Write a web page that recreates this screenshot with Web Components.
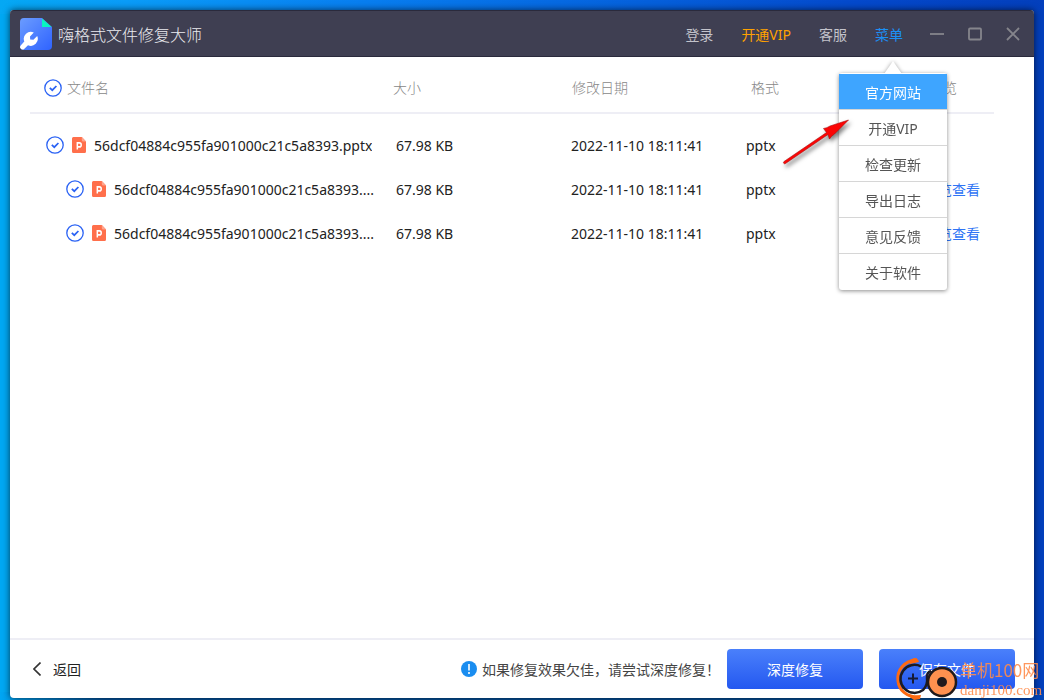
<!DOCTYPE html>
<html lang="zh-CN">
<head>
<meta charset="utf-8">
<meta name="viewport" content="width=device-width, initial-scale=1">
<title>嗨格式文件修复大师</title>
<style>
  * { box-sizing: border-box; }
  html { height: 100%; }
  body {
    margin: 0;
    min-height: 100%;
    display: flex;
    padding: 10px 10px 2px;
    font: 14px/20px "Noto Sans", "Noto Sans CJK SC", sans-serif;
    color: #222;
    background:
      linear-gradient(90deg, #05a8f4 0%, #0a9cf8 12%, #087ef0 35%, #0560dc 62%, #0449cc 82%, #033fbc 100%) top / 100% 14px no-repeat,
      linear-gradient(90deg, #00a6f4 0%, #03519b 10%, #034b92 90%, #0345b8 97%) bottom / 100% 8px no-repeat,
      linear-gradient(90deg, #00a8f3 0%, #00a8f3 50%, #033fbb 50%, #033fbb 100%);
  }
</style>
</head>
<body>

<app-window>
  <title-bar slot="bar" heading="嗨格式文件修复大师"></title-bar>
  <file-list></file-list>
  <action-bar slot="foot">
    <hint-text slot="hint">如果修复效果欠佳，请尝试深度修复！</hint-text>
    <push-button slot="actions">深度修复</push-button>
    <push-button slot="actions">保存文件</push-button>
  </action-bar>
</app-window>
<pointer-arrow></pointer-arrow>
<site-mark></site-mark>

<script>
  const define = (name, html, setup) => {
    const tpl = document.createElement('template');
    tpl.innerHTML = '<style>*{box-sizing:border-box}button{font:inherit;color:inherit;background:none;border:0;padding:0;cursor:pointer}</style>' + html;
    customElements.define(name, class extends HTMLElement {
      connectedCallback() {
        if (this.shadowRoot) return;
        this.attachShadow({ mode: 'open' }).append(tpl.content.cloneNode(true));
        if (setup) setup(this, this.shadowRoot);
      }
    });
  };

  define('app-window', `
    <style>
      :host { flex: 1; min-width: 0; display: flex; flex-direction: column; background: #fff;
        border-radius: 4px; box-shadow: 0 0 7px rgba(0,0,0,.65); }
      main { flex: 1; }
    </style>
    <slot name="bar"></slot>
    <main><slot></slot></main>
    <slot name="foot"></slot>`);

  define('app-logo', `
    <style>:host { display: block; width: 32px; height: 32px; } svg { display: block; }</style>
    <svg width="32" height="32" viewBox="0 0 32 32" aria-hidden="true">
      <defs><linearGradient id="g" x1="0" y1="0" x2="1" y2="1">
        <stop offset="0" stop-color="#6b9cff"/><stop offset="1" stop-color="#2f63ff"/>
      </linearGradient></defs>
      <path d="M4 0H22L32 9V28a4 4 0 0 1-4 4H4a4 4 0 0 1-4-4V4a4 4 0 0 1 4-4Z" fill="url(#g)"/>
      <path d="M22 .5L31.500 9H22Z" fill="#08f7c0"/>
      <path d="M13.800 14.500A7 7 0 0 0 4.300 23.400L.9 27.200a2.400 2.400 0 0 0 3.500 3.500L8 27.200A7 7 0 0 0 17.200 18L13.400 21.800L10.200 21.600L10 18.400Z" fill="#fff"/>
    </svg>`);

  define('title-bar', `
    <style>
      :host { display: flex; align-items: center; height: 47px; padding: 1px 14px 0 10px;
        background: #3f3f52; border: 1px solid #2a2a3c;
        border-left: 0; border-right: 0; border-radius: 4px 4px 0 0; color: #c3c3cb; }
      h1 { flex: 1; margin: 0 0 0 6px; padding-top: 2px; font-size: 16px; line-height: 24px; font-weight: 300; color: #ececf0; white-space: nowrap; }
      nav { display: flex; align-items: center; gap: 28px; padding-top: 2px; white-space: nowrap; font-weight: 400; }
      a { color: inherit; text-decoration: none; }
      .vip { color: #ffa200; }
      .open { color: #1c90f5; }
      .menu { position: relative; }
      drop-menu { position: absolute; top: 48px; left: -36px; z-index: 2; }
      .win { display: flex; gap: 24px; margin-left: 27px; }
      .win button { width: 14px; height: 14px; display: block; }
      svg { display: block; }
    </style>
    <app-logo></app-logo>
    <h1></h1>
    <nav>
      <a href="#login">登录</a>
      <a class="vip" href="#vip">开通VIP</a>
      <a href="#service">客服</a>
      <div class="menu"><button class="open" aria-haspopup="true" aria-expanded="true">菜单</button><drop-menu></drop-menu></div>
    </nav>
    <div class="win">
      <button aria-label="最小化"><svg width="14" height="14" fill="none" stroke="#85858c" stroke-width="1.800"><path d="M0 7H14"/></svg></button>
      <button aria-label="最大化"><svg width="14" height="14" fill="none" stroke="#85858c" stroke-width="1.800"><rect x="1" y="1.500" width="12" height="11" rx="1"/></svg></button>
      <button aria-label="关闭"><svg width="14" height="14" fill="none" stroke="#85858c" stroke-width="1.800"><path d="M1 1L13 13M13 1L1 13"/></svg></button>
    </div>`, (host, root) => { root.querySelector('h1').textContent = host.getAttribute('heading'); });

  define('drop-menu', `
    <style>
      :host { display: block; width: 108px; background: #fff; color: #555; border-radius: 3px;
        filter: drop-shadow(0 1px 2px rgba(0,0,0,.45)); font-weight: 400; padding-top: 1px; }
      .tip { position: absolute; top: -12px; left: 45px; display: block; }
      button { display: block; width: 100%; height: 36px; text-align: center; border-bottom: 1px solid #d6d6d6; padding-top: 2px; }
      button:first-of-type { background: #3ea5ff; color: #fff; }
      button:last-of-type { border-bottom: 0; }
    </style>
    <svg class="tip" width="18" height="13" aria-hidden="true"><path d="M9 0L18 13H0Z" fill="#fff"/></svg>
    <button>官方网站</button><button>开通VIP</button><button>检查更新</button>
    <button>导出日志</button><button>意见反馈</button><button>关于软件</button>`);

  define('round-check', `
    <style>
      :host { display: inline-grid; width: 18px; height: 18px; flex: none; }
      input { appearance: none; grid-area: 1/1; width: 18px; height: 18px; margin: 0; border: 0; }
      svg { grid-area: 1/1; pointer-events: none; fill: none; stroke: #2a62f4; }
    </style>
    <input type="checkbox" checked>
    <svg width="18" height="18" aria-hidden="true">
      <circle cx="9" cy="9" r="8.200" stroke-width="1.300"/>
      <path d="M5.800 8.800L8.300 11.200L12.400 7" stroke-width="1.700"/>
    </svg>`, (host, root) => {
      root.querySelector('input').setAttribute('aria-label', host.getAttribute('label'));
    });

  define('ppt-icon', `
    <style>:host { display: block; width: 14px; height: 16px; flex: none; } svg { display: block; }</style>
    <svg width="14" height="16" viewBox="0 0 15 16" preserveAspectRatio="none" aria-hidden="true">
      <path d="M1.500 0H10.500L15 4.500V14.500a1.500 1.500 0 0 1-1.500 1.500H1.500a1.500 1.500 0 0 1-1.500-1.500V1.500A1.500 1.500 0 0 1 1.500 0Z" fill="#ff6f4b"/>
      <path d="M10.500 0L15 4.500H12a1.500 1.500 0 0 1-1.500-1.500Z" fill="#ffa58e"/>
      <path d="M5.700 12.600V5.900H7.900a1.900 1.900 0 0 1 0 4H5.700" fill="none" stroke="#fff" stroke-width="1.600"/>
    </svg>`);

  define('file-list', `
    <style>
      :host { display: block; padding: 0 40px 0 20px; }
      table { width: 100%; table-layout: fixed; border-collapse: separate; border-spacing: 0; }
      th, td { padding: 0 0 0 3px; text-align: left; font-weight: 400; white-space: nowrap; vertical-align: middle; }
      th { height: 57px; color: #888; border-bottom: 2px solid #eeeef5; padding: 6px 0 0 8px; font-weight: 300; }
      td { height: 44px; padding-top: 2px; }
      tbody::before { content: ""; display: table-row; height: 9px; }
      .size { width: 175px; } .date { width: 175px; } .kind { width: 178px; } .view { width: 73px; }
      th.size { padding-left: 0; } th.date { padding-left: 4px; }
      th.name { padding-left: 14px; } td.name { padding: 0 0 0 16px; }
      .child td.name { padding-left: 36px; }
      .cell { display: flex; align-items: center; gap: 8px; }
      th .cell { gap: 5px; }
      .text { padding-top: 2px; max-width: 281px; overflow: hidden; text-overflow: ellipsis; }
      .child .text { max-width: 263px; }
      a { color: #2f74f5; text-decoration: none; }
    </style>
    <table>
      <thead><tr>
        <th class="name"><div class="cell"><round-check label="全选"></round-check>文件名</div></th>
        <th class="size">大小</th><th class="date">修改日期</th><th class="kind">格式</th><th class="view">预览</th>
      </tr></thead>
      <tbody></tbody>
    </table>`, (host, root) => {
      const id = '56dcf04884c955fa901000c21c5a8393.';
      const rows = [[id + 'pptx', ''], [id + '...', 'child'], [id + '...', 'child']];
      root.querySelector('tbody').innerHTML = rows.map(([name, kind]) => `
        <tr class="${kind}">
          <td class="name"><div class="cell"><round-check label="${name}"></round-check><ppt-icon></ppt-icon><span class="text">${name}</span></div></td>
          <td>67.98 KB</td><td>2022-11-10 18:11:41</td><td>pptx</td>
          <td>${kind ? '<a href="#preview">预览查看</a>' : ''}</td>
        </tr>`).join('');
    });

  define('action-bar', `
    <style>
      :host { display: flex; align-items: center; gap: 16px; height: 60px; padding: 0 19px 0 23px; border-top: 2px solid #eeeef5; }
      .back { display: flex; align-items: center; gap: 12px; margin-right: auto; white-space: nowrap; }
      .back span { padding-top: 2px; }
      .group { display: flex; align-items: center; gap: 7px; }
      .actions { display: flex; gap: 16px; }
    </style>
    <button class="back"><svg width="8" height="14" fill="none" stroke="#333" stroke-width="1.600" aria-hidden="true"><path d="M7.500 .5L1 7L7.500 13.500"/></svg><span>返回</span></button>
    <div class="group"><slot name="hint"></slot><div class="actions"><slot name="actions"></slot></div></div>`);

  define('hint-text', `
    <style>
      :host { display: flex; align-items: center; gap: 5px; color: #444; white-space: nowrap; }
      span { padding-top: 2px; }
    </style>
    <svg width="16" height="16" aria-hidden="true"><circle cx="8" cy="8" r="8" fill="#1a8df0"/>
      <path d="M8 3V9.600M8 11V13" stroke="#fff" stroke-width="1.600"/></svg>
    <span><slot></slot></span>`);

  define('push-button', `
    <style>
      :host { display: block; }
      button { width: 136px; height: 40px; padding-top: 2px; border-radius: 4px; color: #fff; background: linear-gradient(#4a80fb, #2458f0); }
    </style>
    <button><slot></slot></button>`);

  define('pointer-arrow', `
    <style>:host { position: absolute; top: 114px; right: 186px; z-index: 5; pointer-events: none; } svg { display: block; filter: drop-shadow(2px 3px 2px rgba(0,0,0,.5)); }</style>
    <svg width="76" height="58" aria-hidden="true">
      <path d="M66.500 6L52.500 20Q49 22 47.500 25L46 20.500L3.500 49.500a1.200 1.200 0 0 1-1.500-2L44.500 18.500L41.500 14.500Q45 14 48 12Z" fill="#fb0505" stroke="#a81010" stroke-width=".6"/>
    </svg>`);

  define('site-mark', `
    <style>
      :host { position: absolute; right: 3px; bottom: 0; z-index: 6; display: flex; align-items: flex-end; gap: 1px; pointer-events: none; color: #ff8c4c; }
      svg { display: block; }
      .words { width: 81px; opacity: .9; white-space: nowrap; }
      .cn { font: 17px/20px "Noto Sans CJK SC", sans-serif; }
      .en { font: 15px/20px "Liberation Serif", serif; }
    </style>
    <svg width="64" height="44" viewBox="895 656 64 44" aria-hidden="true">
      <path d="M917 659.500C904 661 896.500 670 898 681C899 690 906 697 919 697.500" fill="none" stroke="#ff6a10" stroke-width="3"/>
      <path d="M909 661L914 658L918 659.500L919 662L910 664ZM908 696L921 695L920 699L914 700Z" fill="#ff6a10"/>
      <path d="M921 666.500A14 14 0 1 0 923 690Q928 685 927 677Q927 672 931 671" fill="none" stroke="#1c1c24" stroke-width="2.500"/>
      <path d="M908 678.500H918M913 673.500V683.500" stroke="#161b35" stroke-width="2"/>
      <circle cx="942" cy="682" r="14" fill="#ff914f" stroke="#211a1a" stroke-width="2.500"/>
      <circle cx="942" cy="682" r="5" fill="#221a1c"/>
    </svg>
    <div class="words"><div class="cn">单机100网</div><div class="en">danji100.com</div></div>`);
</script>
</body>
</html>
